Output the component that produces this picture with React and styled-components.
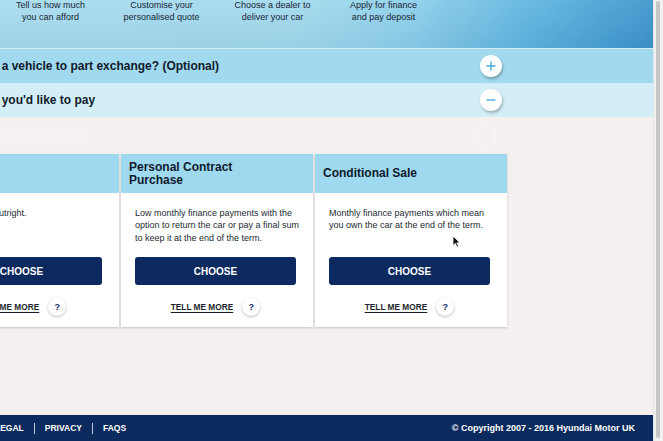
import React from 'react';
import styled, { createGlobalStyle } from 'styled-components';

const Global = createGlobalStyle`
  html, body { margin: 0; padding: 0; height: 100%; overflow: hidden; }
  body { font-family: "Liberation Sans", Arial, sans-serif; background: #f4f0ef; }
  #root { height: 100%; }
`;

const Window = styled.div`
  display: flex;
  width: 663px;
  height: 441px;
  overflow: hidden;
`;

const Page = styled.div`
  flex: 1;
  min-width: 0;
  display: flex;
  flex-direction: column;
  background: #f4f0ef;
  overflow: hidden;
`;

const Track = styled.div`
  width: 10px;
  padding: 1px 0 3px 2px;
  box-sizing: border-box;
  background: #f1f1f1;
  border-left: 1px solid #e4e4e4;
  display: flex;
`;

const Thumb = styled.div`
  width: 4px;
  height: 100%;
  border-radius: 2px;
  background: #c5c5c5;
`;

const Header = styled.header`
  height: 48px;
  border-bottom: 1px solid #d3eef8;
  background:
    linear-gradient(180deg, rgba(255,255,255,0.06) 0%, rgba(0,40,90,0.05) 100%),
    linear-gradient(100deg, #a8dcee 0%, #a3daee 45%, #8fd0ea 62%, #62b6e0 80%, #4aa2d5 92%, #3d94cb 100%);
  overflow: hidden;
`;

const Steps = styled.div`
  display: flex;
  margin: -1px 0 0 -5px;
`;

const Step = styled.div`
  width: 111px;
  flex: none;
  text-align: center;
  font-size: 9px;
  line-height: 12px;
  color: #182636;
`;

const Container = styled.div`
  width: 580px;
  margin-left: -73px;
  flex: none;
`;

const Band = styled.div`
  background: ${(p) => p.$bg};
`;

const AccordionInner = styled(Container)`
  height: 34px;
  display: flex;
  align-items: center;
  justify-content: space-between;
  padding-right: 5px;
  box-sizing: border-box;
`;

const AccordionTitle = styled.div`
  font-size: 12px;
  font-weight: 700;
  color: #111b2c;
  white-space: nowrap;
`;

const RoundButton = styled.button`
  width: 22px;
  height: 22px;
  padding: 0;
  border: none;
  border-radius: 50%;
  background: #fff;
  box-shadow: 1px 2px 3px rgba(0, 0, 0, 0.28);
  display: flex;
  align-items: center;
  justify-content: center;
`;

const GhostInner = styled(Container)`
  height: 37px;
  display: flex;
  align-items: center;
  justify-content: space-between;
  padding: 0 11px 0 73px;
  box-sizing: border-box;
`;

const GhostBlock = styled.div`
  width: 90px;
  height: 22px;
  background: rgba(255, 255, 255, 0.12);
`;

const GhostCircle = styled.div`
  width: 20px;
  height: 20px;
  border-radius: 50%;
  border: 1px solid rgba(255, 255, 255, 0.3);
`;

const Cards = styled(Container)`
  display: flex;
  gap: 2px;
`;

const Card = styled.div`
  position: relative;
  width: 192px;
  flex: none;
  background: #fff;
  box-shadow: 0 1px 2px rgba(0, 0, 0, 0.2);
  display: flex;
  flex-direction: column;
`;

const CardHeader = styled.div`
  height: 39px;
  padding: 0 40px 0 8px;
  display: flex;
  align-items: center;
  background: #9fd9ef;
  font-size: 12px;
  font-weight: 700;
  line-height: 13px;
  color: #0f1b2d;
`;

const CardBody = styled.div`
  padding: 14px 12px 11px 14px;
  display: flex;
  flex-direction: column;
`;

const Desc = styled.p`
  margin: 0;
  min-height: 37px;
  font-size: 9px;
  line-height: 12.4px;
  color: #232a33;
`;

const ChooseButton = styled.button`
  margin-top: 13px;
  width: 161px;
  height: 28px;
  border: none;
  border-radius: 3px;
  background: #0c2a5f;
  color: #fff;
  font-family: inherit;
  font-size: 10px;
  font-weight: 700;
  padding: 0;
`;

const MoreRow = styled.div`
  margin-top: 13px;
  width: 161px;
  height: 18px;
  display: flex;
  align-items: center;
  justify-content: center;
  gap: 8px;
`;

const MoreLink = styled.a`
  font-size: 8.3px;
  font-weight: 700;
  color: #1a1f2b;
  text-decoration: underline;
  text-underline-offset: 2px;
  padding-right: 1px;
`;

const Help = styled.span`
  width: 18px;
  height: 18px;
  border-radius: 50%;
  background: #fff;
  box-shadow: 0 1px 3px rgba(0, 0, 0, 0.25);
  display: flex;
  align-items: center;
  justify-content: center;
  font-size: 9px;
  font-weight: 700;
  color: #1b2c6a;
`;

const Cursor = styled.svg`
  position: absolute;
  left: 137px;
  top: 81px;
`;

const Spacer = styled.div`
  flex: 1;
`;

const Footer = styled.footer`
  height: 26px;
  flex: none;
  background: #0b2a5e;
  display: flex;
  align-items: center;
  justify-content: space-between;
  padding-right: 18px;
  color: #fff;
  font-weight: 700;
`;

const Links = styled.nav`
  display: flex;
  align-items: center;
  margin-left: -5px;
`;

const FooterLink = styled.span`
  font-size: 8.5px;
  padding: 0 10px;
  &:first-child { padding-left: 0; }
`;

const Divider = styled.span`
  width: 1px;
  height: 11px;
  background: rgba(255, 255, 255, 0.75);
`;

const Copyright = styled.span`
  font-size: 9px;
`;

const Plus = () => (
  <svg width="10" height="10" viewBox="0 0 10 10">
    <path d="M5 0.5V9.5M0.5 5H9.5" stroke="#4aa8d8" strokeWidth="1.4" />
  </svg>
);

const Minus = () => (
  <svg width="10" height="10" viewBox="0 0 10 10">
    <path d="M0.5 5H9.5" stroke="#63b8dd" strokeWidth="1.6" />
  </svg>
);

const steps = [
  ['Tell us how much', 'you can afford'],
  ['Customise your', 'personalised quote'],
  ['Choose a dealer to', 'deliver your car'],
  ['Apply for finance', 'and pay deposit'],
];

const cards = [
  { title: 'Cash', desc: 'Buy your car outright.' },
  {
    title: 'Personal Contract Purchase',
    desc: 'Low monthly finance payments with the option to return the car or pay a final sum to keep it at the end of the term.',
  },
  {
    title: 'Conditional Sale',
    desc: 'Monthly finance payments which mean you own the car at the end of the term.',
    cursor: true,
  },
];

export default function App() {
  return (
    <>
      <Global />
      <Window>
        <Page>
          <Header>
            <Steps>
              {steps.map(([a, b]) => (
                <Step key={a}>
                  {a}
                  <br />
                  {b}
                </Step>
              ))}
            </Steps>
          </Header>
          <Band $bg="#a1d9ee">
            <AccordionInner>
              <AccordionTitle>Do you have a vehicle to part exchange? (Optional)</AccordionTitle>
              <RoundButton aria-label="Expand">
                <Plus />
              </RoundButton>
            </AccordionInner>
          </Band>
          <Band $bg="#d4eef7">
            <AccordionInner>
              <AccordionTitle>Choose how you'd like to pay</AccordionTitle>
              <RoundButton aria-label="Collapse">
                <Minus />
              </RoundButton>
            </AccordionInner>
          </Band>
          <GhostInner>
            <GhostBlock />
            <GhostCircle />
          </GhostInner>
          <Cards>
            {cards.map((c) => (
              <Card key={c.title}>
                <CardHeader>{c.title}</CardHeader>
                <CardBody>
                  <Desc>{c.desc}</Desc>
                  <ChooseButton>CHOOSE</ChooseButton>
                  <MoreRow>
                    <MoreLink>TELL ME MORE</MoreLink>
                    <Help>?</Help>
                  </MoreRow>
                </CardBody>
                {c.cursor && (
                  <Cursor width="9" height="13" viewBox="0 0 9 13">
                    <path d="M1 1V10.5L3.3 8.4L5 12L6.6 11.3L4.9 7.8H8Z" fill="#111" stroke="#fff" strokeWidth="0.8" />
                  </Cursor>
                )}
              </Card>
            ))}
          </Cards>
          <Spacer />
          <Footer>
            <Links>
              <FooterLink>LEGAL</FooterLink>
              <Divider />
              <FooterLink>PRIVACY</FooterLink>
              <Divider />
              <FooterLink>FAQS</FooterLink>
            </Links>
            <Copyright>© Copyright 2007 - 2016 Hyundai Motor UK</Copyright>
          </Footer>
        </Page>
        <Track>
          <Thumb />
        </Track>
      </Window>
    </>
  );
}
